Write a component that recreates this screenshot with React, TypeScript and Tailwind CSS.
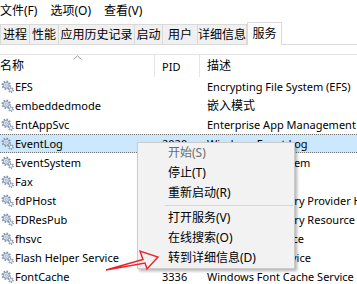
import React from 'react';

type Row = {
  name: string;
  pid?: string;
  desc: string;
  selected?: boolean;
};

const rows: Row[] = [
  { name: 'EFS', desc: 'Encrypting File System (EFS)' },
  { name: 'embeddedmode', desc: '嵌入模式' },
  { name: 'EntAppSvc', desc: 'Enterprise App Management Service' },
  { name: 'EventLog', pid: '2020', desc: 'Windows Event Log', selected: true },
  { name: 'EventSystem', pid: '1476', desc: 'COM+ Event System' },
  { name: 'Fax', desc: '传真' },
  { name: 'fdPHost', pid: '5160', desc: 'Function Discovery Provider Host' },
  { name: 'FDResPub', pid: '5908', desc: 'Function Discovery Resource Publication' },
  { name: 'fhsvc', desc: 'File History Service' },
  { name: 'Flash Helper Service', desc: 'Flash Helper Service' },
  { name: 'FontCache', pid: '3336', desc: 'Windows Font Cache Service' },
];

const tabs = [
  { label: '进程', w: 'w-[30px]' },
  { label: '性能', w: 'w-[30px]' },
  { label: '应用历史记录', w: 'w-[77px]' },
  { label: '启动', w: 'w-[29px]' },
  { label: '用户', w: 'w-[36px]' },
  { label: '详细信息', w: 'w-[50px]' },
];

const menuItems = [
  { label: '开始(S)', disabled: true },
  { label: '停止(T)' },
  { label: '重新启动(R)' },
  { sep: true },
  { label: '打开服务(V)' },
  { label: '在线搜索(O)' },
  { label: '转到详细信息(D)' },
];

// latin text is set a little smaller so Noto Sans gets Segoe UI's widths
const size = (s: string) => (/[\u4e00-\u9fff]/.test(s) ? 'text-[12px]' : 'text-[11px]');

function GearIcon() {
  return (
    <svg width="13" height="13" viewBox="0 0 13 13" className="shrink-0">
      <circle cx="5.2" cy="5.2" r="3.6" fill="none" stroke="#7f93ae" strokeWidth="2.2" strokeDasharray="1.5 1.3" />
      <circle cx="5.2" cy="5.2" r="3" fill="#dfe6ef" stroke="#8599b3" strokeWidth="0.9" />
      <circle cx="5.2" cy="5.2" r="1.1" fill="#ffffff" stroke="#8599b3" strokeWidth="0.7" />
      <circle cx="10" cy="10" r="2.2" fill="none" stroke="#8da0b8" strokeWidth="1.6" strokeDasharray="1.1 1" />
      <circle cx="10" cy="10" r="1.7" fill="#e6ebf2" stroke="#8da0b8" strokeWidth="0.7" />
    </svg>
  );
}

export default function App() {
  return (
    <div className="relative w-[357px] h-[284px] overflow-hidden bg-white text-[12px] text-black font-['Segoe_UI','Noto_Sans','Noto_Sans_CJK_SC',sans-serif] leading-none">
      {/* menu bar */}
      <div className="flex items-center h-[22px] gap-[13px] pl-0">
        <span>文件(F)</span>
        <span>选项(O)</span>
        <span>查看(V)</span>
      </div>

      {/* tabs */}
      <div className="flex items-end h-[23px] border-b border-[#d9d9d9]">
        {tabs.map((t) => (
          <div
            key={t.label}
            className={`${t.w} h-[20px] flex items-center justify-center bg-[#f0f0f0] border border-b-0 border-[#d9d9d9] -mr-px whitespace-nowrap`}
          >
            {t.label}
          </div>
        ))}
        <div className="w-[35px] h-[23px] -mb-px ml-px flex items-center justify-center bg-white border border-b-0 border-[#d9d9d9] whitespace-nowrap">
          服务
        </div>
      </div>

      {/* list */}
      <div className="mt-[9px] border-t border-[#e5e5e5]">
        <div className="relative flex h-[22px] items-center">
          <div className="w-[155px] h-full flex items-center border-r border-[#e5e5e5]">名称</div>
          <div className="w-[45px] h-full flex items-center pl-[7px] border-r border-[#e5e5e5] text-[11px]">PID</div>
          <div className="pl-[7px]">描述</div>
          <svg width="9" height="5" viewBox="0 0 9 5" className="absolute left-[73px] top-0">
            <path d="M0.5 4.5 L4.5 0.8 L8.5 4.5" fill="none" stroke="#9a9a9a" strokeWidth="1" />
          </svg>
        </div>
        {rows.map((r) => (
          <div
            key={r.name}
            className={`flex h-[19px] items-center whitespace-nowrap ${
              r.selected ? 'bg-[#cce8ff] border-y border-dotted border-[#707070]' : ''
            }`}
          >
            <div className="w-[155px] shrink-0 flex items-center gap-[1px] pl-[1px]">
              <GearIcon />
              <span className={size(r.name)}>{r.name}</span>
            </div>
            <div className="w-[45px] shrink-0 pl-[7px] text-[11px]">{r.pid}</div>
            <div className={`pl-[7px] ${size(r.desc)}`}>{r.desc}</div>
          </div>
        ))}
      </div>

      {/* context menu */}
      <div className="absolute left-[137px] top-[142px] w-[158px] bg-[#f2f2f2] border border-[#cccccc] shadow-[2px_2px_3px_rgba(0,0,0,0.3)]">
        {menuItems.map((m, i) =>
          m.sep ? (
            <div key={i} className="h-px my-[2px] ml-[27px] mr-px bg-[#d7d7d7]" />
          ) : (
            <div
              key={i}
              className={`h-[20px] flex items-center pl-[30px] ${m.disabled ? 'text-[#6d6d6d]' : ''}`}
            >
              {m.label}
            </div>
          )
        )}
      </div>

      {/* red arrow */}
      <svg width="357" height="284" className="absolute left-0 top-0 pointer-events-none">
        <polygon
          points="106,270 143,259.5 140,251 158,257 147,269 145,263"
          fill="none"
          stroke="#e8232a"
          strokeWidth="1.4"
          strokeLinejoin="miter"
        />
      </svg>
    </div>
  );
}
